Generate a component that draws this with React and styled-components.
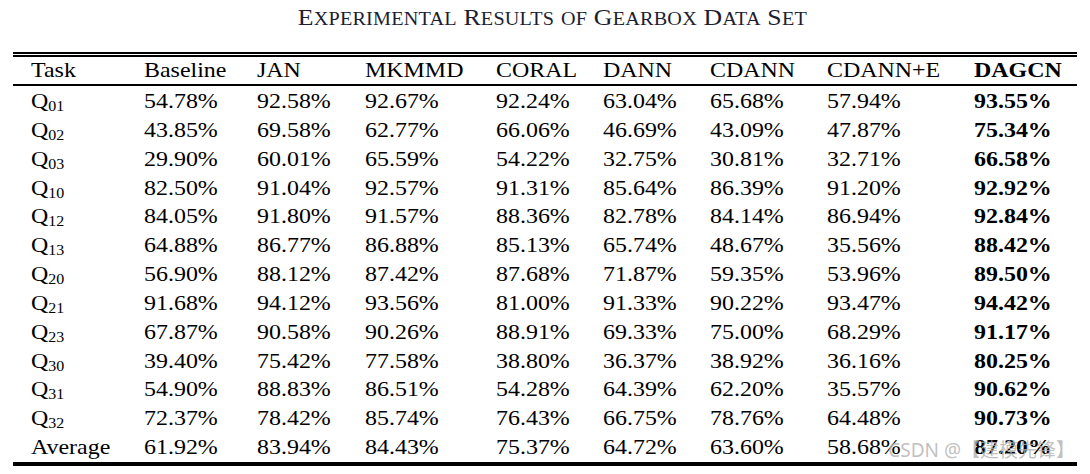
import React from "react";
import styled, { createGlobalStyle } from "styled-components";

const GlobalStyle = createGlobalStyle`
  html, body {
    margin: 0;
    padding: 0;
    background: #ffffff;
  }
  body {
    font-family: "Liberation Serif", "Times New Roman", serif;
    color: #000000;
  }
`;

const columns = [
  "Task",
  "Baseline",
  "JAN",
  "MKMMD",
  "CORAL",
  "DANN",
  "CDANN",
  "CDANN+E",
  "DAGCN",
];

const rows = [
  ["01", "54.78%", "92.58%", "92.67%", "92.24%", "63.04%", "65.68%", "57.94%", "93.55%"],
  ["02", "43.85%", "69.58%", "62.77%", "66.06%", "46.69%", "43.09%", "47.87%", "75.34%"],
  ["03", "29.90%", "60.01%", "65.59%", "54.22%", "32.75%", "30.81%", "32.71%", "66.58%"],
  ["10", "82.50%", "91.04%", "92.57%", "91.31%", "85.64%", "86.39%", "91.20%", "92.92%"],
  ["12", "84.05%", "91.80%", "91.57%", "88.36%", "82.78%", "84.14%", "86.94%", "92.84%"],
  ["13", "64.88%", "86.77%", "86.88%", "85.13%", "65.74%", "48.67%", "35.56%", "88.42%"],
  ["20", "56.90%", "88.12%", "87.42%", "87.68%", "71.87%", "59.35%", "53.96%", "89.50%"],
  ["21", "91.68%", "94.12%", "93.56%", "81.00%", "91.33%", "90.22%", "93.47%", "94.42%"],
  ["23", "67.87%", "90.58%", "90.26%", "88.91%", "69.33%", "75.00%", "68.29%", "91.17%"],
  ["30", "39.40%", "75.42%", "77.58%", "38.80%", "36.37%", "38.92%", "36.16%", "80.25%"],
  ["31", "54.90%", "88.83%", "86.51%", "54.28%", "64.39%", "62.20%", "35.57%", "90.62%"],
  ["32", "72.37%", "78.42%", "85.74%", "76.43%", "66.75%", "78.76%", "64.48%", "90.73%"],
];

const average = ["Average", "61.92%", "83.94%", "84.43%", "75.37%", "64.72%", "63.60%", "58.68%", "87.20%"];

const titleWords = [
  ["E", "xperimental"],
  ["R", "esults"],
  ["", "of"],
  ["G", "earbox"],
  ["D", "ata"],
  ["S", "et"],
];

const Page = styled.div`
  padding: 3px 13px 0;
`;

const Title = styled.h1`
  margin: 0 0 18px;
  padding-left: 14px;
  text-align: center;
  font-family: "Liberation Serif", "Times New Roman", serif;
  font-weight: normal;
  font-size: 23px;
  line-height: 30px;
  color: #1c1d30;
  letter-spacing: 0.2px;
`;

const TitleText = styled.span`
  display: inline-block;
  transform: scaleX(1.12);
  transform-origin: center;
`;

const SmallCaps = styled.span`
  font-size: 18px;
  text-transform: uppercase;
`;

const Table = styled.div`
  position: relative;
  border-top: 2px solid #000;
  padding-top: 1px;
`;

const HeaderWrap = styled.div`
  border-top: 2px solid #000;
  border-bottom: 2px solid #000;
`;

const Row = styled.div`
  display: grid;
  grid-template-columns: 113px 113px 108px 131px 107px 107px 117px 147px 1fr;
  padding-left: 18px;
  font-size: 21px;
  line-height: ${(p) => (p.header ? "27px" : "28.85px")};
  white-space: nowrap;
`;

const Cell = styled.span`
  display: inline-block;
  justify-self: start;
  transform: scaleX(1.14);
  transform-origin: left center;
  font-weight: ${(p) => (p.bold ? "bold" : "normal")};
`;

const Body = styled.div`
  padding-top: 1px;
  border-bottom: 4px solid #000;
`;

const Sub = styled.sub`
  font-size: 14px;
  line-height: 0;
  vertical-align: -3px;
`;

const Watermark = styled.div`
  position: absolute;
  right: 2px;
  bottom: 4px;
  font-family: "Noto Sans", "Noto Sans CJK SC", sans-serif;
  font-size: 19px;
  line-height: 24px;
  color: rgba(175, 175, 175, 0.8);
  white-space: nowrap;
  pointer-events: none;
`;

export default function App() {
  return (
    <Page>
      <GlobalStyle />
      <Title>
        <TitleText>
          {titleWords.map(([cap, rest], i) => (
            <React.Fragment key={i}>
              {i > 0 && " "}
              {cap}
              <SmallCaps>{rest}</SmallCaps>
            </React.Fragment>
          ))}
        </TitleText>
      </Title>
      <Table>
        <HeaderWrap>
          <Row header>
            {columns.map((c, i) => (
              <Cell key={c} bold={i === columns.length - 1}>
                {c}
              </Cell>
            ))}
          </Row>
        </HeaderWrap>
        <Body>
          {rows.map((r) => (
            <Row key={r[0]}>
              <Cell>
                Q<Sub>{r[0]}</Sub>
              </Cell>
              {r.slice(1).map((v, i) => (
                <Cell key={i} bold={i === r.length - 2}>
                  {v}
                </Cell>
              ))}
            </Row>
          ))}
          <Row>
            {average.map((v, i) => (
              <Cell key={i} bold={i === average.length - 1}>
                {v}
              </Cell>
            ))}
          </Row>
        </Body>
        <Watermark>CSDN @【建模先锋】</Watermark>
      </Table>
    </Page>
  );
}
